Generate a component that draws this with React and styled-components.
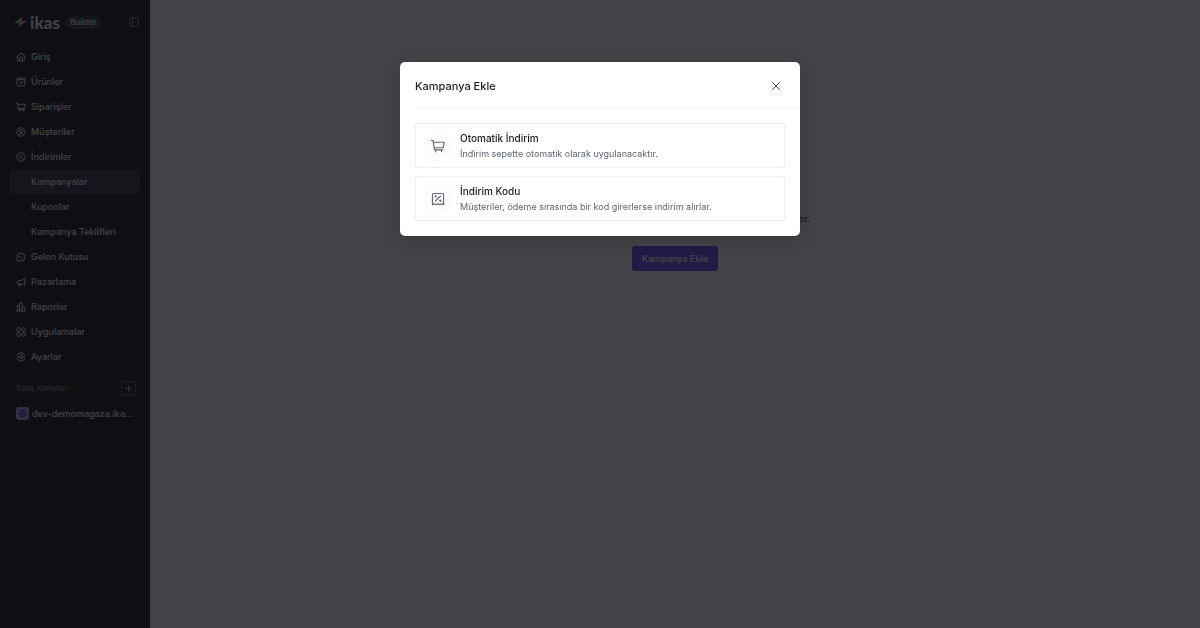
import { useState } from "react";
import styled, { createGlobalStyle } from "styled-components";

const mainLinks = [
  { icon: "home", label: "Giriş" },
  { icon: "bag", label: "Ürünler" },
  { icon: "cart", label: "Siparişler" },
  { icon: "user", label: "Müşteriler" },
  {
    icon: "discount",
    label: "İndirimler",
    children: ["Kampanyalar", "Kuponlar", "Kampanya Teklifleri"],
  },
  { icon: "chat", label: "Gelen Kutusu" },
  { icon: "megaphone", label: "Pazarlama" },
  { icon: "report", label: "Raporlar" },
  { icon: "grid", label: "Uygulamalar" },
  { icon: "gear", label: "Ayarlar" },
];

const campaignTypes = [
  {
    icon: "cart",
    title: "Otomatik İndirim",
    text: "İndirim sepette otomatik olarak uygulanacaktır.",
  },
  {
    icon: "coupon",
    title: "İndirim Kodu",
    text: "Müşteriler, ödeme sırasında bir kod girerlerse indirim alırlar.",
  },
];

const shapes = {
  home: (
    <>
      <path d="M1.5 11 12 2.5 22.5 11" />
      <path d="M4 9.5V19a2.5 2.5 0 0 0 2.5 2.5h11A2.5 2.5 0 0 0 20 19V9.5" />
      <path d="M8.5 21.5V16a3.5 3.5 0 0 1 7 0v5.5" />
    </>
  ),
  bag: (
    <>
      <rect x="2.5" y="2.5" width="19" height="19" rx="2.5" />
      <path d="M2.5 6.5h19M8 10.5a4 4 0 0 0 8 0" />
    </>
  ),
  cart: (
    <>
      <path d="M0 2.5h3.5L6 18.500h15" />
      <path d="M4 5.500h18.500l-1.500 9.500H5.500" />
      <path d="M8 18.500v4M18 18.500v4" />
    </>
  ),
  user: (
    <>
      <circle cx="12" cy="12" r="10" />
      <circle cx="12" cy="10" r="4" />
      <path d="M5.5 19.2c1.2-2.5 3.5-3.7 6.5-3.7s5.3 1.2 6.5 3.7" />
    </>
  ),
  discount: (
    <>
      <circle cx="12" cy="12" r="10" />
      <path d="M8 16l8-8" />
      <circle cx="8.5" cy="8.5" r="1" />
      <circle cx="15.5" cy="15.5" r="1" />
    </>
  ),
  chat: (
    <>
      <path d="M2.5 21.5V12a9.5 9.5 0 1 1 9.5 9.5z" />
      <path d="M8 9.5v3h4M12 15h4" />
    </>
  ),
  megaphone: (
    <path d="M21 3v17.5L14 16.5H5A2.5 2.5 0 0 1 2.5 14v-2A2.5 2.5 0 0 1 5 9.5L14 7.500zM6.5 16.5l1 5h4l-1-5" />
  ),
  report: (
    <path d="M3 21.5v-13h5.5v13M8.5 21.5v-19H15v19M15 21.500V12h6v9.500M1 21.500h22" />
  ),
  grid: (
    <>
      <rect x="2" y="2" width="8" height="8" rx="1.5" />
      <rect x="14" y="2" width="8" height="8" rx="1.5" />
      <rect x="2" y="14" width="8" height="8" rx="1.5" />
      <rect x="14" y="14" width="8" height="8" rx="1.5" />
    </>
  ),
  gear: (
    <>
      <path d="M9.5 2h5l.8 2.7 2.700-.7 2.700 4.300-1.900 2.500v2.400l1.900 2.500-2.700 4.300-2.700-.7-.8 2.700h-5l-.8-2.700-2.700.7-2.700-4.300 1.900-2.500v-2.400l-1.900-2.500L6 4l2.700.7z" />
      <circle cx="12" cy="12" r="3.5" />
    </>
  ),
  coupon: (
    <>
      <path d="M2.5 22V4.5a2 2 0 0 1 2-2h15a2 2 0 0 1 2 2V22l-3.200-2-3.100 2-3.200-2-3.200 2-3.100-2z" />
      <path d="M7 16 17 6.5" />
      <circle cx="8" cy="7.5" r="1" />
      <circle cx="16" cy="15" r="1" />
    </>
  ),
  collapse: (
    <>
      <rect x="2" y="2" width="20" height="20" rx="3" />
      <path d="M8 2v20M16 9l-3 3 3 3" />
    </>
  ),
  plus: <path d="M12 2v20M2 12h20" />,
  close: <path d="M3 3l18 18M21 3 3 21" />,
  globe: (
    <>
      <circle cx="12" cy="12" r="10" />
      <path d="M2 12h20M12 2v20M12 2c-6 5-6 15 0 20M12 2c6 5 6 15 0 20" />
    </>
  ),
};

function Icon({ name, size = 10, stroke = 2 }) {
  return (
    <svg
      width={size}
      height={size}
      viewBox="0 0 24 24"
      fill="none"
      stroke="currentColor"
      strokeWidth={stroke}
      strokeLinejoin="round"
      aria-hidden="true"
    >
      {shapes[name]}
    </svg>
  );
}

function Sidebar() {
  return (
    <Side>
      <Brand>
        <svg width="13" height="12" viewBox="0 0 26 24" aria-hidden="true">
          <path d="M17 1 0 14h10.500L9 23l17-13H15.500z" fill="#b4b58c" />
        </svg>
        <BrandName>ikas</BrandName>
        <Badge>Builder</Badge>
        <CollapseButton type="button" aria-label="Menüyü daralt">
          <Icon name="collapse" />
        </CollapseButton>
      </Brand>
      <nav>
        {mainLinks.map((link) => (
          <div key={link.label}>
            <NavLink href="#">
              <Icon name={link.icon} stroke={2.4} />
              {link.label}
            </NavLink>
            {link.children?.map((child) => (
              <SubLink key={child} href="#" $active={child === "Kampanyalar"}>
                {child}
              </SubLink>
            ))}
          </div>
        ))}
      </nav>
      <Channels>
        <span>Satış Kanalları</span>
        <AddButton type="button" aria-label="Satış kanalı ekle">
          <Icon name="plus" size={7} stroke={3} />
        </AddButton>
      </Channels>
      <Store href="#">
        <StoreIcon>
          <Icon name="globe" size={9} />
        </StoreIcon>
        dev-demomagaza.ika...
      </Store>
    </Side>
  );
}

function CampaignDialog({ onClose }) {
  return (
    <Backdrop>
      <Dialog role="dialog" aria-modal="true" aria-labelledby="dialog-title">
        <DialogHeader>
          <DialogTitle id="dialog-title">Kampanya Ekle</DialogTitle>
          <CloseButton type="button" aria-label="Kapat" onClick={onClose}>
            <Icon name="close" stroke={2.4} />
          </CloseButton>
        </DialogHeader>
        <Options>
          {campaignTypes.map((type) => (
            <Option key={type.title} type="button">
              <OptionIcon>
                <Icon name={type.icon} size={14} />
              </OptionIcon>
              <span>
                <OptionTitle>{type.title}</OptionTitle>
                <OptionText>{type.text}</OptionText>
              </span>
            </Option>
          ))}
        </Options>
      </Dialog>
    </Backdrop>
  );
}

export default function App() {
  const [open, setOpen] = useState(true);

  return (
    <>
      <GlobalStyle />
      <Layout>
        <Sidebar />
        <Main>
          <EmptyText>
            Kampanya ekleyerek müşterilerine indirimler sunman gerekiyor.
          </EmptyText>
          <PrimaryButton type="button" onClick={() => setOpen(true)}>
            Kampanya Ekle
          </PrimaryButton>
        </Main>
      </Layout>
      {open && <CampaignDialog onClose={() => setOpen(false)} />}
    </>
  );
}

const GlobalStyle = createGlobalStyle`
  * {
    box-sizing: border-box;
  }

  body {
    margin: 0;
    font-family: Inter, sans-serif;
    font-size: 9px;
    line-height: 15px;
    color: #1c1b20;
  }

  button {
    font: inherit;
    color: inherit;
    padding: 0;
    border: none;
    background: none;
    cursor: pointer;
  }

  a {
    color: inherit;
    text-decoration: none;
  }

  svg {
    flex-shrink: 0;
  }
`;

const Layout = styled.div`
  display: flex;
  min-height: 100vh;
`;

const Side = styled.aside`
  width: 150px;
  flex-shrink: 0;
  padding: 12px 10px;
  background: #0d0b11;
  color: #eeedf2;
  font-weight: 500;
`;

const Brand = styled.div`
  display: flex;
  align-items: center;
  gap: 3px;
  height: 20px;
  margin-bottom: 12px;
  padding: 0 1px 0 4px;
`;

const BrandName = styled.span`
  font-family: Lato, sans-serif;
  font-size: 17px;
  font-weight: 900;
`;

const Badge = styled.span`
  margin-left: 2px;
  padding: 0 5px;
  border-radius: 8px;
  background: #2c2a32;
  font-size: 8px;
  line-height: 13px;
`;

const CollapseButton = styled.button`
  display: flex;
  margin-left: auto;
  opacity: 0.7;
`;

const NavLink = styled.a`
  display: flex;
  align-items: center;
  gap: 5px;
  height: 25px;
  padding: 0 6px;
`;

const SubLink = styled.a`
  display: flex;
  align-items: center;
  height: 25px;
  padding-left: 21px;
  border-radius: 3px;
  background: ${(props) => (props.$active ? "#2c2a32" : "none")};
`;

const Channels = styled.div`
  display: flex;
  align-items: center;
  justify-content: space-between;
  margin-top: 12px;
  padding: 0 4px 0 6px;
  color: #8a8991;
  font-size: 8px;
  font-weight: 400;
`;

const AddButton = styled.button`
  display: grid;
  place-items: center;
  width: 15px;
  height: 15px;
  border: 1px solid #4f4d56;
  border-radius: 3px;
  color: #c9c8cf;
`;

const Store = styled.a`
  display: flex;
  align-items: center;
  gap: 3px;
  margin-top: 10px;
  padding-left: 6px;
  white-space: nowrap;
`;

const StoreIcon = styled.span`
  display: grid;
  place-items: center;
  width: 13px;
  height: 13px;
  flex-shrink: 0;
  border-radius: 3px;
  background: #b5a8f5;
  color: #3b1fb5;
`;

const Main = styled.main`
  flex: 1;
  display: flex;
  flex-direction: column;
  align-items: center;
  gap: 20px;
  padding-top: 211px;
  background: #f7f6f9;
`;

const EmptyText = styled.p`
  margin: 0;
`;

const PrimaryButton = styled.button`
  height: 25px;
  padding: 0 10px;
  border-radius: 3px;
  background: #6f3ff5;
  color: #fff;
  font-weight: 500;
`;

const Backdrop = styled.div`
  position: fixed;
  inset: 0;
  display: flex;
  align-items: flex-start;
  justify-content: center;
  padding-top: 62px;
  background: rgba(16, 15, 20, 0.78);
`;

const Dialog = styled.section`
  width: 100%;
  max-width: 400px;
  border-radius: 5px;
  background: #fff;
  box-shadow: 0 4px 16px rgba(0, 0, 0, 0.15);
`;

const DialogHeader = styled.header`
  display: flex;
  align-items: center;
  justify-content: space-between;
  height: 46px;
  margin-left: 15px;
  padding: 3px 19px 0 0;
  border-bottom: 1px solid #f5f6f8;
`;

const DialogTitle = styled.h2`
  margin: 0;
  font-size: 11px;
  font-weight: 500;
`;

const CloseButton = styled.button`
  display: flex;
  color: #4b4b52;
`;

const Options = styled.div`
  display: grid;
  gap: 8px;
  padding: 15px;
`;

const Option = styled.button`
  display: flex;
  align-items: center;
  gap: 7px;
  height: 45px;
  padding: 0 7px;
  border: 1px solid #eceef1;
  border-radius: 2px;
  text-align: left;
`;

const OptionIcon = styled.span`
  display: grid;
  place-items: center;
  width: 30px;
  height: 30px;
  border-radius: 50%;
  background: #fafcfd;
  color: #66696f;
`;

const OptionTitle = styled.span`
  display: block;
  font-size: 10px;
  font-weight: 500;
`;

const OptionText = styled.span`
  display: block;
  color: #5d6470;
`;
